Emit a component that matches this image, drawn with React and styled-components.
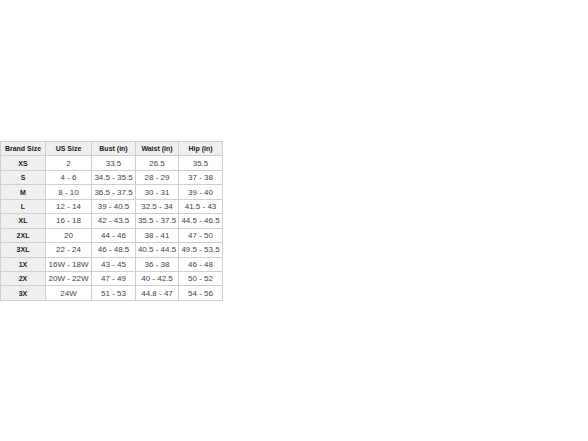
import React from "react";
import styled, { createGlobalStyle } from "styled-components";

const Global = createGlobalStyle`
  html, body { margin: 0; padding: 0; background: #fff; }
  body { font-family: "Liberation Sans", Arial, sans-serif; }
`;

const Page = styled.div`
  width: 588px;
  height: 441px;
  padding-top: 141px;
  box-sizing: border-box;
`;

const Table = styled.table`
  border-collapse: collapse;
  width: 223px;
  table-layout: fixed;
  font-family: "Liberation Sans", Arial, sans-serif;
  color: #333;
`;

const Row = styled.tr`
  height: 14.45px;
`;

const Th = styled.th`
  border: 1px solid #cfcfcf;
  background: #efefef;
  font-weight: bold;
  font-size: 7px;
  color: #222;
  text-align: center;
  padding: 0;
  white-space: nowrap;
`;

const Td = styled.td`
  border: 1px solid #cfcfcf;
  background: ${(p) => (p.$label ? "#efefef" : "#fff")};
  font-weight: ${(p) => (p.$label ? "bold" : "normal")};
  font-size: ${(p) => (p.$label ? "7px" : "8px")};
  color: ${(p) => (p.$label ? "#222" : "#444")};
  text-align: center;
  padding: 0;
  white-space: nowrap;
`;

const headers = ["Brand Size", "US Size", "Bust (in)", "Waist (in)", "Hip (in)"];
const widths = [45, 46, 44, 43, 44];
const rows = [
  ["XS", "2", "33.5", "26.5", "35.5"],
  ["S", "4 - 6", "34.5 - 35.5", "28 - 29", "37 - 38"],
  ["M", "8 - 10", "36.5 - 37.5", "30 - 31", "39 - 40"],
  ["L", "12 - 14", "39 - 40.5", "32.5 - 34", "41.5 - 43"],
  ["XL", "16 - 18", "42 - 43.5", "35.5 - 37.5", "44.5 - 46.5"],
  ["2XL", "20", "44 - 46", "38 - 41", "47 - 50"],
  ["3XL", "22 - 24", "46 - 48.5", "40.5 - 44.5", "49.5 - 53.5"],
  ["1X", "16W - 18W", "43 - 45", "36 - 38", "46 - 48"],
  ["2X", "20W - 22W", "47 - 49", "40 - 42.5", "50 - 52"],
  ["3X", "24W", "51 - 53", "44.8 - 47", "54 - 56"],
];

export default function App() {
  return (
    <>
      <Global />
      <Page>
        <Table>
          <colgroup>
            {widths.map((w, i) => (
              <col key={i} style={{ width: w }} />
            ))}
          </colgroup>
          <thead>
            <Row>
              {headers.map((h) => (
                <Th key={h}>{h}</Th>
              ))}
            </Row>
          </thead>
          <tbody>
            {rows.map((r) => (
              <Row key={r[0]}>
                {r.map((c, i) => (
                  <Td key={i} $label={i === 0}>
                    {c}
                  </Td>
                ))}
              </Row>
            ))}
          </tbody>
        </Table>
      </Page>
    </>
  );
}
